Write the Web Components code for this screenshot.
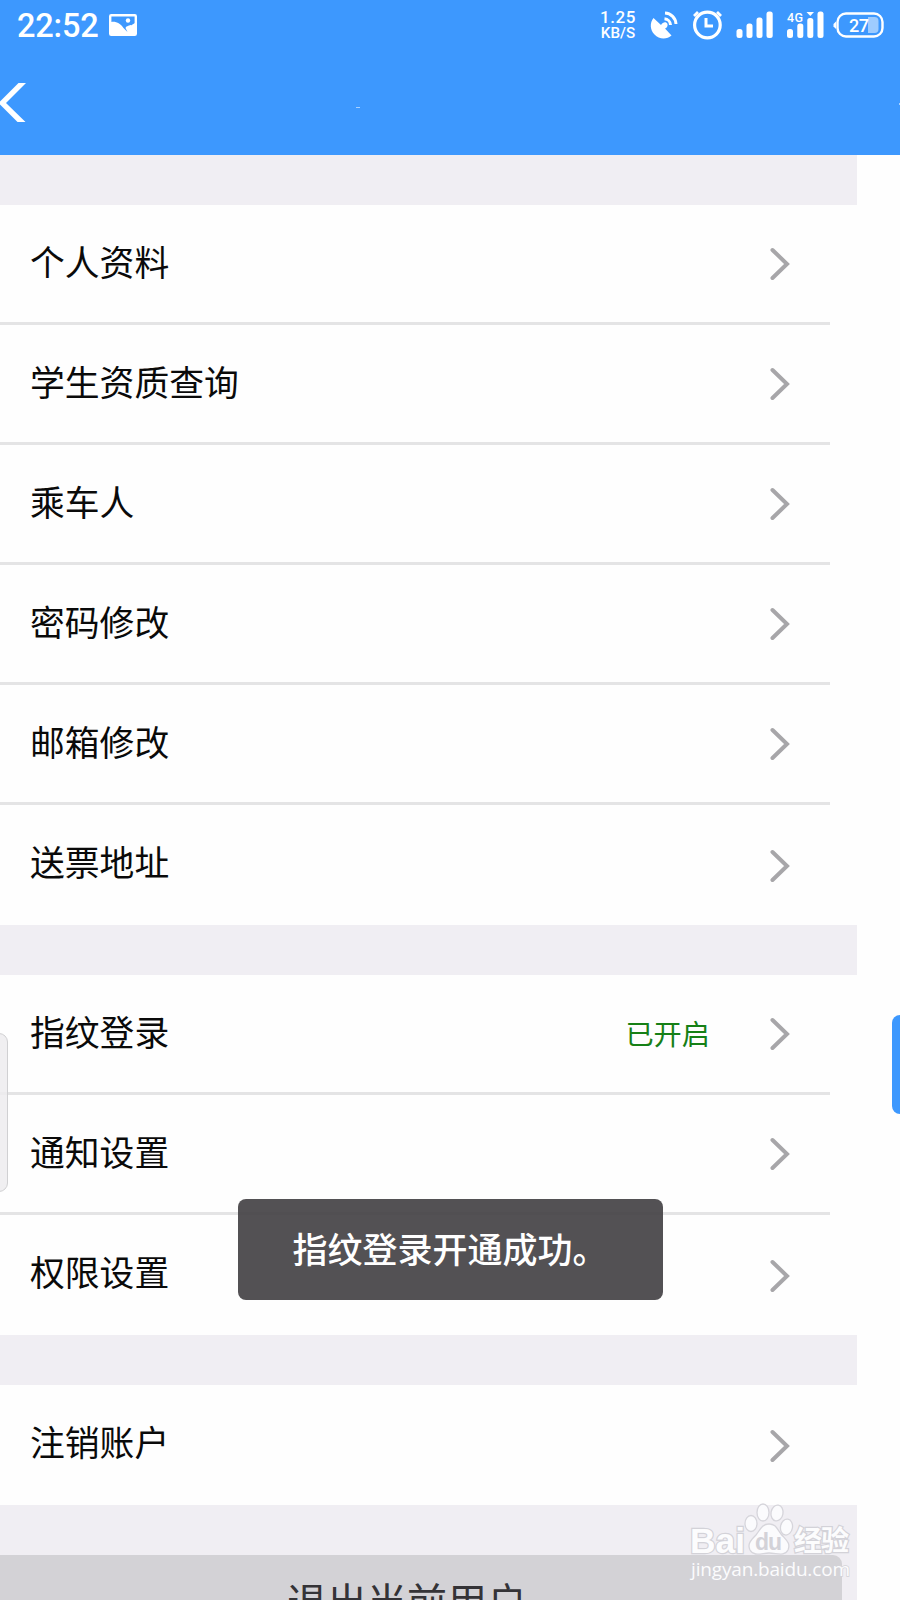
<!DOCTYPE html>
<html lang="zh-CN">
<head>
<meta charset="utf-8">
<title>设置</title>
<style>
html,body{margin:0;padding:0}
body{width:900px;height:1600px;overflow:hidden;background:#fefefe;font-family:Roboto,"Noto Sans CJK SC",sans-serif}
</style>
</head>
<body>
<settings-screen></settings-screen>
<script>
const define = (name, html) => customElements.define(name, class extends HTMLElement {
  constructor() {
    super();
    this.attachShadow({mode: 'open'}).innerHTML = html;
  }
});

define('status-bar', `
<style>
:host{display:flex;height:50px;align-items:center;color:#fff;box-sizing:border-box;padding:0 0 0 17px}
.time{font:500 32.500px/50px Roboto,sans-serif;width:82px;white-space:nowrap;letter-spacing:-.2px;padding-top:1px}
svg{display:block;flex:none;overflow:visible}
.pic{margin-left:10px}
.rate{margin-left:auto;width:36px;text-align:center;font:500 16px/15px Roboto,sans-serif;white-space:nowrap;padding-top:1px}
.rate div+div{font-size:15.200px;line-height:16px}
.rate div:first-child{font-size:17px;letter-spacing:.6px}
.icons{width:250px;height:50px;margin-left:14px}
text{font-family:Roboto,sans-serif;font-weight:500;fill:#fff}
</style>
<span class="time">22:52</span>
<svg class="pic" width="28" height="22" viewBox="0 0 28 22"><rect x="1.2" y="1.2" width="25.6" height="19.6" rx="1" fill="none" stroke="#fff" stroke-width="2.4"/><path d="M2 8C7 7 12 10 14.500 14L18.500 18L16.500 14C17 12 19 12 22 11V21H2Z" fill="#fff"/><path d="M21 12L26 9V21H18Z" fill="#fff"/><circle cx="19" cy="6.500" r="2.200" fill="#fff"/></svg>
<div class="rate"><div>1.25</div><div>KB/S</div></div>
<svg class="icons" viewBox="650 0 250 50" fill="#fff">
<path d="M653.500 18L661 25C663 21.500 666.500 21.500 667.500 24C668 26.500 666.500 28 665 28.500L671.500 35.500C667 39.500 659 39.500 654.500 34.500C650 30 649.500 23 653.500 18Z"/>
<path d="M665 13A11.500 11.500 0 0 1 676 24M664.500 18.800A6.500 6.500 0 0 1 670.500 25" fill="none" stroke="#fff" stroke-width="3"/>
<circle cx="707.400" cy="25" r="12.800" fill="none" stroke="#fff" stroke-width="3.200"/>
<path d="M706 18V26H713" fill="none" stroke="#fff" stroke-width="3"/>
<path d="M694 16L698 12M721 16L717 12" fill="none" stroke="#fff" stroke-width="2.800"/>
<g><rect x="736.500" y="29" width="6" height="9" rx="2.500"/><rect x="746.500" y="23.500" width="6" height="14.500" rx="2.500"/><rect x="756.500" y="17.500" width="6" height="20.500" rx="2.500"/><rect x="766.500" y="11.500" width="6.200" height="26.500" rx="2.500"/></g>
<g><rect x="787" y="29" width="6" height="9" rx="2.500"/><rect x="797.300" y="23.500" width="6" height="14.500" rx="2.500"/><rect x="807.300" y="18" width="6" height="20" rx="2.500"/><rect x="817.500" y="11.500" width="6" height="26.500" rx="2.500"/><path d="M806.500 12H814L810.300 16Z"/></g>
<text x="787" y="21.500" font-size="12.500" textLength="16">4G</text>
<rect x="837.500" y="13.500" width="45" height="23" rx="8.500" fill="none" stroke="#fff" stroke-width="2.400"/>
<path d="M836 21.500V29L833.500 26.500V24Z"/>
<path d="M868 17H874.500Q878.500 17 878.500 21V29Q878.500 33 874.500 33H868Z" opacity=".5"/>
<text x="849" y="32" font-size="18" textLength="20">27</text>
</svg>`);

define('title-bar', `
<style>
:host{display:flex;height:105px;align-items:center;position:relative}
svg{display:block}
i{position:absolute;top:57px;height:1px;background:#a9d1ff}
.a{left:356px;width:4px}.b{right:0;width:1px;height:2px;top:53px}
</style>
<svg width="28" height="105" viewBox="0 50 28 105"><path d="M26 83H18.500L0 101.500V104.500L17.500 122H25.500L6 103Z" fill="#fff"/></svg>
<i class="a"></i><i class="b"></i>`);

define('settings-row', `
<style>
:host{display:flex;align-items:center;box-sizing:border-box;width:830px;height:120px;padding:0 40px 0 30px;border-bottom:3px solid #e4e4e5;color:#0a0a0a;font-size:34.800px}
:host([last]){border-bottom:0}
.label{flex:1;line-height:52px;margin-top:1px}
:host([last]) .label{margin-top:-2px}
.value{font-size:28.200px;line-height:40px;color:#168016;margin-right:60px;margin-top:5px}
svg{display:block}
:host([last]) svg{margin-top:2px}
</style>
<span class="label"><slot></slot></span>
<span class="value"><slot name="value"></slot></span>
<svg width="20" height="34" viewBox="0 0 20 34"><path d="M2.500 3L17 17L2.500 31" fill="none" stroke="#a7a6a9" stroke-width="4" stroke-linecap="round"/></svg>`);

define('settings-group', `
<style>
:host{display:block;width:856.700px;border-top:50px solid #f0eef3}
</style>
<slot></slot>`);

define('logout-button', `
<style>
:host{display:block;width:857px;height:95px;background:#f0eef3;padding-top:50px;box-sizing:border-box;overflow:hidden}
div{width:842px;height:100px;border-top-right-radius:9px;background:#d3d2d6;color:#343337;text-align:center;font-size:40px;line-height:98px;box-sizing:border-box;padding-right:28px}
</style>
<div><slot></slot></div>`);

define('toast-message', `
<style>
:host{display:block;position:absolute;left:237.500px;top:1199px;width:425px;height:101px;box-sizing:border-box;padding-left:55px;border-radius:8px;background:rgba(66,64,67,.91);color:#fff;font-size:35px;font-weight:500;line-height:105px;white-space:nowrap}
</style>
<slot></slot>`);

define('edge-handle', `
<style>
:host{display:block;position:absolute;box-sizing:border-box}
:host([side=left]){left:-10px;top:1033px;width:18px;height:159px;border:1.500px solid #d0d0d2;border-radius:9px;background:rgba(237,236,239,.85)}
:host([side=right]){right:-10px;top:1015px;width:18px;height:99px;border-radius:8px;background:#3d98fe}
</style>`);

define('site-watermark', `
<style>
:host{display:block;position:absolute;left:688px;top:1500px;width:170px;height:90px}
svg{display:block;overflow:visible}
text{fill:#fcfcfd;stroke:#d3d2d8;stroke-width:2.400px;paint-order:stroke}
</style>
<svg width="170" height="90" viewBox="688 1500 170 90">
<g fill="#fbfbfd" stroke="#d6d5db" stroke-width="1.300"><ellipse cx="751" cy="1523.500" rx="6" ry="8"/><ellipse cx="763" cy="1512.500" rx="6" ry="8.500"/><ellipse cx="777" cy="1513" rx="6" ry="8" transform="rotate(10 777 1513)"/><ellipse cx="786.500" cy="1527" rx="6" ry="8" transform="rotate(10 786 1527)"/><path d="M769 1524C762 1524 760 1530 756 1535C751 1540 747 1544 750 1550C754 1557 762 1553 769 1553C777 1553 784 1557 788 1550C791 1543 786 1540 781 1534C777 1529 776 1524 769 1524Z"/></g>
<text x="690" y="1553" font-family="Liberation Sans,sans-serif" font-weight="700" font-size="35" textLength="55" lengthAdjust="spacingAndGlyphs">Bai</text>
<text x="755" y="1550" font-family="Liberation Sans,sans-serif" font-weight="700" font-size="23" textLength="27" style="fill:#d3d2d8;stroke:none">du</text>
<text x="794" y="1551" font-family="Noto Sans CJK SC,sans-serif" font-weight="700" font-size="28" textLength="55">经验</text>
<text x="691" y="1576" font-family="Open Sans,sans-serif" font-size="19" textLength="159" style="stroke-width:1.500px">jingyan.baidu.com</text>
</svg>`);

define('settings-screen', `
<style>
:host{display:block;position:relative;width:900px;height:1600px;overflow:hidden}
header{height:155px;background:#3d98fe}
</style>
<header><status-bar></status-bar><title-bar></title-bar></header>
<main>
<settings-group>
<settings-row>个人资料</settings-row>
<settings-row>学生资质查询</settings-row>
<settings-row>乘车人</settings-row>
<settings-row>密码修改</settings-row>
<settings-row>邮箱修改</settings-row>
<settings-row last>送票地址</settings-row>
</settings-group>
<settings-group>
<settings-row>指纹登录<span slot="value">已开启</span></settings-row>
<settings-row>通知设置</settings-row>
<settings-row last>权限设置</settings-row>
</settings-group>
<settings-group>
<settings-row last>注销账户</settings-row>
</settings-group>
<logout-button>退出当前用户</logout-button>
</main>
<edge-handle side="left"></edge-handle>
<edge-handle side="right"></edge-handle>
<toast-message>指纹登录开通成功。</toast-message>
<site-watermark></site-watermark>`);
</script>
</body>
</html>
